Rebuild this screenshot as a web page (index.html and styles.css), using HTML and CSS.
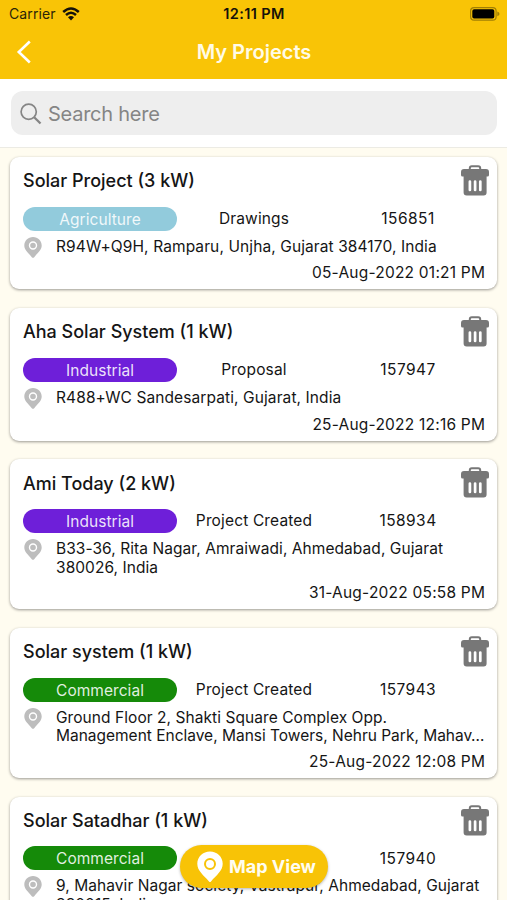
FILE: index.html
```html
<!DOCTYPE html>
<html lang="en">
<head>
<meta charset="utf-8">
<title>My Projects</title>
<link rel="stylesheet" href="styles.css">
</head>
<body>
<svg class="defs" width="0" height="0" aria-hidden="true">
  <symbol id="trash" viewBox="0 0 28 31">
    <path d="M8.800 5V3.200Q8.800 1.200 10.800 1.200H17.200Q19.200 1.200 19.200 3.200V5" fill="none" stroke="#777" stroke-width="2"/>
    <path d="M3 4H25Q28 4 28 7V10Q28 11.500 26.500 11.500H25.600V27.500Q25.600 30.500 22.600 30.500H5.600Q2.600 30.500 2.600 27.500V11.500H1.500Q0 11.500 0 10V7Q0 4 3 4Z" fill="#777"/>
    <path d="M8.900 16.500V25M14.100 16.500V25M19.300 16.500V25" stroke="#fff" stroke-width="2.700" stroke-linecap="round"/>
  </symbol>
  <symbol id="pin" viewBox="0 0 18 21">
    <path d="M9 0C4 0 .3 3.700 .3 8.500C.3 13 4 15.300 7.800 20.200Q9 21.500 10.200 20.200C14 15.300 17.700 13 17.700 8.500C17.700 3.700 14 0 9 0Z" fill="#bdbdbd"/>
    <circle cx="9" cy="8.500" r="3.500" fill="none" stroke="#fff" stroke-width="1.400"/>
  </symbol>
</svg>
<div class="screen">
  <header class="header">
    <div class="status">
      <div class="carrier"><span>Carrier</span>
        <svg class="wifi" width="18" height="14" viewBox="0 0 18 14">
          <path d="M1.200 5Q9-2 16.800 5M4 8Q9 3.600 14 8" fill="none" stroke="#15120a" stroke-width="2.500"/>
          <path d="M6 10.200Q9 7.800 12 10.200L9 13.500Z" fill="#15120a"/>
        </svg>
      </div>
      <div class="clock">12:11 PM</div>
      <svg class="battery" width="30" height="14" viewBox="0 0 30 14">
        <rect x=".6" y=".6" width="25.500" height="12.600" rx="3.500" fill="none" stroke="#a17f05" stroke-width="1.200"/>
        <rect x="2.300" y="2.300" width="22" height="9.200" rx="1.800" fill="#000"/>
        <path d="M27.300 4.600Q29.500 5.500 29.500 7T27.300 9.300Z" fill="#a17f05"/>
      </svg>
    </div>
    <div class="navbar">
      <svg class="back" width="16" height="26" viewBox="0 0 16 26"><path d="M13.800 2.500L2.800 13L13.800 23.500" fill="none" stroke="#fff" stroke-width="2.600"/></svg>
      <h1>My Projects</h1>
    </div>
  </header>
  <div class="search-area">
    <div class="search">
      <svg width="22" height="22" viewBox="0 0 22 22"><circle cx="8.700" cy="8.700" r="7.600" fill="none" stroke="#858585" stroke-width="1.700"/><path d="M14.200 14.200L20.500 20.500" stroke="#858585" stroke-width="2.300"/></svg>
      <span>Search here</span>
    </div>
  </div>
  <main class="list">
    <article class="card">
      <div class="top"><h2>Solar Project (3 kW)</h2><svg class="trash"><use href="#trash"/></svg></div>
      <div class="info"><span class="tag agriculture">Agriculture</span><span>Drawings</span><span class="id">156851</span></div>
      <div class="place"><svg class="pin"><use href="#pin"/></svg><p>R94W+Q9H, Ramparu, Unjha, Gujarat 384170, India</p></div>
      <time>05-Aug-2022 01:21 PM</time>
    </article>
    <article class="card">
      <div class="top"><h2>Aha Solar System (1 kW)</h2><svg class="trash"><use href="#trash"/></svg></div>
      <div class="info"><span class="tag industrial">Industrial</span><span>Proposal</span><span class="id">157947</span></div>
      <div class="place"><svg class="pin"><use href="#pin"/></svg><p>R488+WC Sandesarpati, Gujarat, India</p></div>
      <time>25-Aug-2022 12:16 PM</time>
    </article>
    <article class="card">
      <div class="top"><h2>Ami Today (2 kW)</h2><svg class="trash"><use href="#trash"/></svg></div>
      <div class="info"><span class="tag industrial">Industrial</span><span>Project Created</span><span class="id">158934</span></div>
      <div class="place two-line"><svg class="pin"><use href="#pin"/></svg><p>B33-36, Rita Nagar, Amraiwadi, Ahmedabad, Gujarat<br>380026, India</p></div>
      <time>31-Aug-2022 05:58 PM</time>
    </article>
    <article class="card">
      <div class="top"><h2>Solar system (1 kW)</h2><svg class="trash"><use href="#trash"/></svg></div>
      <div class="info"><span class="tag commercial">Commercial</span><span>Project Created</span><span class="id">157943</span></div>
      <div class="place two-line"><svg class="pin"><use href="#pin"/></svg><p>Ground Floor 2, Shakti Square Complex Opp.<br><span class="tight">Management Enclave, Mansi Towers, Nehru Park, Mahav…</span></p></div>
      <time>25-Aug-2022 12:08 PM</time>
    </article>
    <article class="card">
      <div class="top"><h2>Solar Satadhar (1 kW)</h2><svg class="trash"><use href="#trash"/></svg></div>
      <div class="info"><span class="tag commercial">Commercial</span><span></span><span class="id">157940</span></div>
      <div class="place two-line"><svg class="pin"><use href="#pin"/></svg><p>9, Mahavir Nagar society, Vastrapur, Ahmedabad, Gujarat<br>380015, India</p></div>
    </article>
  </main>
  <div class="map-button">
    <svg width="26" height="32" viewBox="0 0 26 32"><path d="M13 .5C6 .5 .3 5.800 .3 12.800C.3 20 6.500 24 12 30.500Q13 31.600 14 30.500C19.500 24 25.700 20 25.700 12.800C25.700 5.800 20 .5 13 .5Z" fill="#fff"/><circle cx="13" cy="13" r="5" fill="none" stroke="#f8c306" stroke-width="2"/></svg>
    <span>Map View</span>
  </div>
</div>
</body>
</html>
```

FILE: styles.css
```css
* { box-sizing: border-box; }
body { margin: 0; font-family: Inter, "Liberation Sans", sans-serif; color: #151515; }
h1, h2, p { margin: 0; }
.defs { display: block; height: 0; }
.screen { position: relative; width: 507px; height: 900px; overflow: hidden; background: #fffcf0; }
.header { height: 79px; background: #f9c406; }
.status { display: grid; grid-template-columns: 1fr auto 1fr; align-items: center; height: 27px; padding: 0 8px 0 9px; font-size: 14px; }
.battery { justify-self: end; margin-right: -1px; }
.carrier { display: flex; align-items: center; gap: 6px; color: #2b2408; letter-spacing: .1px; }
.clock { font-weight: 600; color: #15120a; font-size: 14.500px; letter-spacing: .4px; }
.navbar { display: grid; grid-template-columns: 40px 1fr 40px; align-items: center; height: 50px; padding: 0 15px 0 16px; }
h1 { font-size: 20px; font-weight: 600; line-height: 24px; text-align: center; color: #fffbe6; }
.search-area { height: 69px; padding: 12px 10px 0 11px; background: #fff; border-bottom: 1px solid #ecebe4; }
.search { display: flex; align-items: center; gap: 6px; height: 44px; padding: 1px 9px 0; border-radius: 12px; background: #eee; color: #858585; font-size: 20px; letter-spacing: -.25px; }
.list { display: flex; flex-direction: column; gap: 18.700px; padding: 9px 10px 0; }
.card { flex: none; padding: 8px 12px 6px 13px; border-radius: 9px; background: #fff; box-shadow: 0 1px 3px rgba(0,0,0,.4); }
.top { display: flex; justify-content: space-between; height: 41.500px; margin-right: -4px; }
h2 { padding-top: 4.300px; font-size: 18px; line-height: 24px; font-weight: 500; }
.trash { width: 28px; height: 31px; }
.info { display: grid; grid-template-columns: repeat(3, 1fr); align-items: center; text-align: center; height: 24px; font-size: 15.500px; letter-spacing: .15px; }
.info .id { letter-spacing: .45px; }
.tag { height: 24px; line-height: 25px; border-radius: 12px; color: rgba(255,255,255,.88); letter-spacing: .05px; }
.agriculture { background: #92cbdc; }
.industrial { background: #6e1fd9; }
.commercial { background: #158a09; }
.place { display: flex; gap: 14px; padding: 7.300px 0 0 1px; }
.pin { flex: none; width: 18px; height: 21px; margin: -1px 0 -3px; }
.place p { margin-bottom: 7.200px; font-size: 15.500px; letter-spacing: .1px; line-height: 18.500px; white-space: nowrap; }
.place.two-line p { margin-bottom: 6.200px; letter-spacing: .06px; }
.place .tight { letter-spacing: -.01px; }
time { display: block; font-size: 15.500px; letter-spacing: .22px; line-height: 20px; text-align: right; margin-right: -.2px; }
.map-button { position: absolute; left: 180px; top: 845px; display: flex; align-items: center; gap: 6px; width: 148px; height: 43px; padding-left: 17px; border-radius: 22px; background: #f8c306; color: #fffdf0; font-size: 18px; font-weight: 700; box-shadow: 0 1px 3px rgba(0,0,0,.3); }
```
